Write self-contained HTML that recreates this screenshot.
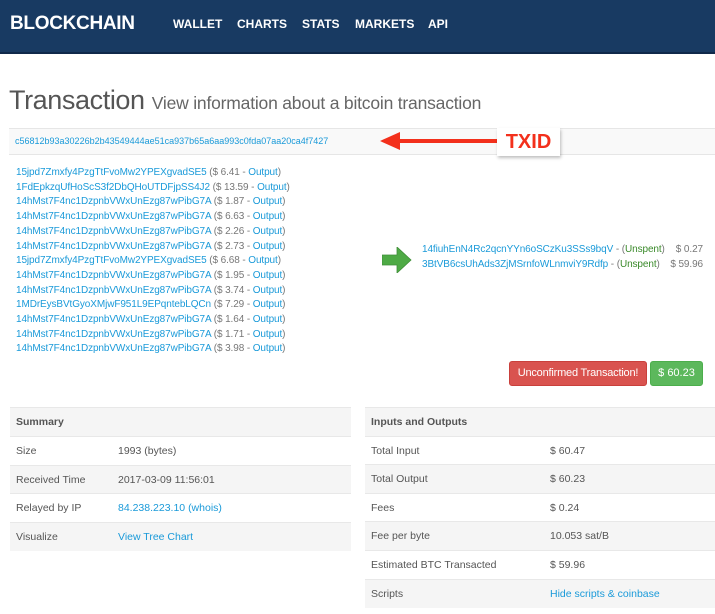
<!DOCTYPE html>
<html><head><meta charset="utf-8"><style>
*{margin:0;padding:0;box-sizing:border-box}
body{width:715px;height:614px;overflow:hidden;background:#fff;font-family:"Liberation Sans",sans-serif;position:relative;color:#555}
.nav{position:absolute;left:0;top:0;width:715px;height:54px;background:#183a62;border-bottom:2px solid #10294a}
.logo{position:absolute;left:10px;top:13px;color:#fff;font-weight:bold;font-size:19px;letter-spacing:-0.3px}
.nav a{position:absolute;top:17px;color:#fff;font-weight:bold;font-size:12px}
.abs{position:absolute;white-space:nowrap}
a{color:#1a9ad9;text-decoration:none}
.h1{left:9px;top:85px;font-size:27px;color:#555;letter-spacing:-0.4px}
.h1 small{font-size:17.5px;color:#666;letter-spacing:-0.2px}
.txid{position:absolute;left:9px;top:128px;width:706px;height:27px;background:#f9f9f9;border-top:1px solid #e6e6e6;border-bottom:1px solid #e6e6e6}
.in{left:16px;font-size:10px;color:#777;letter-spacing:-0.1px}
.row{position:absolute;height:29px;font-size:10.5px;color:#555;line-height:28px;border-top:1px solid #e8e8e8}
.g{background:#f5f5f5}
.row span{position:absolute;left:6px}
.row b{font-weight:normal;position:absolute}
</style></head><body>
<div class="nav">
<div class="logo">BLOCKCHAIN</div>
<a style="left:173px">WALLET</a><a style="left:237px">CHARTS</a><a style="left:302px">STATS</a><a style="left:355px">MARKETS</a><a style="left:428px">API</a>
</div>
<div class="abs h1">Transaction <small>View information about a bitcoin transaction</small></div>
<div class="txid"></div>
<div class="abs" style="left:15px;top:136px;font-size:9px"><a>c56812b93a30226b2b43549444ae51ca937b65a6aa993c0fda07aa20ca4f7427</a></div>
<svg class="abs" style="left:378px;top:131px" width="125" height="22"><rect x="16" y="8" width="106" height="4" fill="#f3301c"/><polygon points="2,10 22,1 22,19" fill="#f3301c"/></svg>
<div class="abs" style="left:497px;top:128px;width:63px;height:28px;background:#fff;box-shadow:1px 2px 3px rgba(0,0,0,.25);color:#f3301c;font-weight:bold;font-size:20px;line-height:28px;text-align:center">TXID</div>

<div class="abs in" style="top:166px;line-height:14.7px">
<a>15jpd7Zmxfy4PzgTtFvoMw2YPEXgvadSE5</a> ($ 6.41 - <a>Output</a>)<br>
<a>1FdEpkzqUfHoScS3f2DbQHoUTDFjpSS4J2</a> ($ 13.59 - <a>Output</a>)<br>
<a>14hMst7F4nc1DzpnbVWxUnEzg87wPibG7A</a> ($ 1.87 - <a>Output</a>)<br>
<a>14hMst7F4nc1DzpnbVWxUnEzg87wPibG7A</a> ($ 6.63 - <a>Output</a>)<br>
<a>14hMst7F4nc1DzpnbVWxUnEzg87wPibG7A</a> ($ 2.26 - <a>Output</a>)<br>
<a>14hMst7F4nc1DzpnbVWxUnEzg87wPibG7A</a> ($ 2.73 - <a>Output</a>)<br>
<a>15jpd7Zmxfy4PzgTtFvoMw2YPEXgvadSE5</a> ($ 6.68 - <a>Output</a>)<br>
<a>14hMst7F4nc1DzpnbVWxUnEzg87wPibG7A</a> ($ 1.95 - <a>Output</a>)<br>
<a>14hMst7F4nc1DzpnbVWxUnEzg87wPibG7A</a> ($ 3.74 - <a>Output</a>)<br>
<a>1MDrEysBVtGyoXMjwF951L9EPqntebLQCn</a> ($ 7.29 - <a>Output</a>)<br>
<a>14hMst7F4nc1DzpnbVWxUnEzg87wPibG7A</a> ($ 1.64 - <a>Output</a>)<br>
<a>14hMst7F4nc1DzpnbVWxUnEzg87wPibG7A</a> ($ 1.71 - <a>Output</a>)<br>
<a>14hMst7F4nc1DzpnbVWxUnEzg87wPibG7A</a> ($ 3.98 - <a>Output</a>)
</div>

<svg class="abs" style="left:382px;top:247px" width="30" height="26"><polygon points="0,8 15,8 15,0 29,13 15,26 15,18 0,18" fill="#4eaa45" stroke="#3e8e37" stroke-width="0.8"/></svg>
<div class="abs in" style="left:422px;top:243px;line-height:14.7px">
<a>14fiuhEnN4Rc2qcnYYn6oSCzKu3SSs9bqV</a> - (<span style="color:#3a8a2a">Unspent</span>)<br>
<a>3BtVB6csUhAds3ZjMSrnfoWLnmviY9Rdfp</a> - (<span style="color:#3a8a2a">Unspent</span>)
</div>
<div class="abs in" style="left:auto;right:12px;top:243px;line-height:14.7px;text-align:right">$ 0.27<br>$ 59.96</div>

<div class="abs" style="left:509px;top:361px;width:138px;height:25px;background:#d9534f;border:1px solid #c9403c;border-radius:3px;color:#fff;font-size:11px;line-height:23px;text-align:center;letter-spacing:-0.2px">Unconfirmed Transaction!</div>
<div class="abs" style="left:650px;top:361px;width:53px;height:25px;background:#5cb85c;border:1px solid #4cae4c;border-radius:3px;color:#fff;font-size:11px;line-height:23px;text-align:center">$ 60.23</div>

<div class="row g" style="left:10px;top:407px;width:341px;font-weight:bold"><span>Summary</span></div>
<div class="row" style="left:10px;top:436px;width:341px"><span>Size</span><b style="left:108px">1993 (bytes)</b></div>
<div class="row g" style="left:10px;top:465px;width:341px"><span>Received Time</span><b style="left:108px">2017-03-09 11:56:01</b></div>
<div class="row" style="left:10px;top:493px;width:341px"><span>Relayed by IP</span><b style="left:108px"><a>84.238.223.10 (whois)</a></b></div>
<div class="row g" style="left:10px;top:522px;width:341px"><span>Visualize</span><b style="left:108px"><a>View Tree Chart</a></b></div>

<div class="row g" style="left:365px;top:407px;width:350px;font-weight:bold"><span>Inputs and Outputs</span></div>
<div class="row" style="left:365px;top:436px;width:350px"><span>Total Input</span><b style="left:185px">$ 60.47</b></div>
<div class="row g" style="left:365px;top:464px;width:350px"><span>Total Output</span><b style="left:185px">$ 60.23</b></div>
<div class="row" style="left:365px;top:493px;width:350px"><span>Fees</span><b style="left:185px">$ 0.24</b></div>
<div class="row g" style="left:365px;top:521px;width:350px"><span>Fee per byte</span><b style="left:185px">10.053 sat/B</b></div>
<div class="row" style="left:365px;top:550px;width:350px"><span>Estimated BTC Transacted</span><b style="left:185px">$ 59.96</b></div>
<div class="row g" style="left:365px;top:579px;width:350px"><span>Scripts</span><b style="left:185px"><a>Hide scripts &amp; coinbase</a></b></div>
</body></html>
